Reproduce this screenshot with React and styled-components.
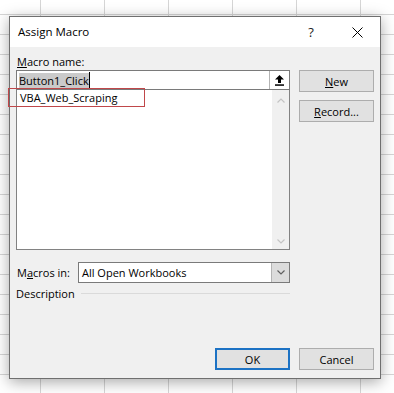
import React from 'react';
import styled, { createGlobalStyle } from 'styled-components';

const Global = createGlobalStyle`
  html, body { margin: 0; padding: 0; }
  body {
    width: 394px;
    height: 393px;
    overflow: hidden;
    font-family: "Open Sans", "Noto Sans", sans-serif;
  }
`;

const Sheet = styled.div`
  box-sizing: border-box;
  width: 394px;
  height: 393px;
  padding: 16px 0 0 9px;
  background-color: #fff;
  background-image:
    linear-gradient(to right, #d6d6d6 1px, transparent 1px),
    linear-gradient(to bottom, #d6d6d6 1px, transparent 1px);
  background-size: 64px 100%, 100% 20px;
  background-position: 40px 0, 0 14px;
`;

const Dialog = styled.div`
  box-sizing: border-box;
  width: 372px;
  height: 363px;
  border: 1px solid #6f6f6f;
  background: #f0f0f0;
  box-shadow: 0 3px 14px rgba(0, 0, 0, 0.35);
  display: flex;
  flex-direction: column;
  font-family: "Open Sans", "Noto Sans", sans-serif;
  font-size: 11px;
  color: #000;
`;

const TitleBar = styled.div`
  height: 30px;
  flex: none;
  background: #fff;
  display: flex;
  align-items: center;
  padding-left: 8px;
`;

const Title = styled.div`
  flex: 1;
  font-size: 11.5px;
  color: #000;
  margin-top: -1px;
`;

const TitleButton = styled.div`
  width: 46px;
  height: 30px;
  display: flex;
  align-items: center;
  justify-content: center;
  font-size: 13px;
  color: #222;
`;

const Body = styled.div`
  flex: 1;
  display: flex;
  flex-direction: column;
  padding: 6px 6px 8px 6px;
`;

const TopSection = styled.div`
  display: flex;
  gap: 9px;
`;

const LeftCol = styled.div`
  width: 274px;
  display: flex;
  flex-direction: column;
`;

const Label = styled.div`
  height: 17px;
  line-height: 17px;
  padding-left: 1px;
  white-space: nowrap;
`;

const Key = styled.span`
  text-decoration: underline;
  text-underline-offset: 1px;
`;

const NameInput = styled.div`
  box-sizing: border-box;
  height: 20px;
  border: 1px solid #7a7a7a;
  background: #fff;
  display: flex;
  align-items: center;
  position: relative;
  z-index: 1;
`;

const Field = styled.div`
  flex: 1;
  display: flex;
  align-items: center;
  padding-left: 2px;
`;

const Selected = styled.span`
  background: #cacaca;
  line-height: 15px;
  height: 15px;
`;

const Caret = styled.span`
  width: 1px;
  height: 16px;
  background: #000;
`;

const CollapseButton = styled.div`
  box-sizing: border-box;
  width: 20px;
  height: 100%;
  border-left: 1px solid #b4b4b4;
  display: flex;
  align-items: center;
  justify-content: center;
`;

const ListBox = styled.div`
  position: relative;
  box-sizing: border-box;
  height: 161px;
  margin-top: -1px;
  border: 1px solid #828282;
  background: #fff;
  display: flex;
`;

const Items = styled.div`
  flex: 1;
`;

const Item = styled.div`
  height: 16px;
  line-height: 16px;
  padding-left: 3px;
`;

const ScrollTrack = styled.div`
  width: 17px;
  background: #f0f0f0;
  display: flex;
  flex-direction: column;
  justify-content: space-between;
  align-items: center;
  padding: 8px 0 5px;
  box-sizing: border-box;
`;

const Annotation = styled.div`
  position: absolute;
  z-index: 2;
  top: -2px;
  left: -9px;
  width: 137px;
  height: 19px;
  box-sizing: border-box;
  border: 1px solid #c0474a;
`;

const ButtonCol = styled.div`
  display: flex;
  flex-direction: column;
  gap: 8px;
  padding-top: 17px;
`;

const Button = styled.div`
  box-sizing: border-box;
  width: 75px;
  height: 22px;
  border: ${p => (p.$default ? '2px solid #1c72c4' : '1px solid #adadad')};
  background: #e1e1e1;
  display: flex;
  align-items: center;
  justify-content: center;
  white-space: nowrap;
`;

const MacrosRow = styled.div`
  margin-top: 12px;
  width: 274px;
  display: flex;
  align-items: center;
  height: 21px;
`;

const RowLabel = styled.div`
  width: 62px;
  padding-left: 1px;
  box-sizing: border-box;
  white-space: nowrap;
`;

const Select = styled.div`
  box-sizing: border-box;
  flex: 1;
  height: 21px;
  border: 1px solid #7a7a7a;
  background: #fff;
  display: flex;
  align-items: center;
`;

const SelectText = styled.div`
  flex: 1;
  padding-left: 3px;
`;

const DropButton = styled.div`
  box-sizing: border-box;
  width: 18px;
  height: 100%;
  background: #dcdcdc;
  border-left: 1px solid #b4b4b4;
  display: flex;
  align-items: center;
  justify-content: center;
`;

const DescriptionRow = styled.div`
  margin-top: 2px;
  width: 274px;
  height: 16px;
  display: flex;
  align-items: center;
  gap: 6px;
`;

const Rule = styled.div`
  flex: 1;
  height: 1px;
  background: #dadada;
`;

const Footer = styled.div`
  margin-top: auto;
  display: flex;
  justify-content: flex-end;
  gap: 9px;
`;

const Chevron = ({ up, color }) => (
  <svg width="8" height="5" viewBox="0 0 8 5">
    <polyline
      points={up ? '0.5,4.5 4,1 7.5,4.5' : '0.5,0.5 4,4 7.5,0.5'}
      fill="none"
      stroke={color}
      strokeWidth="1.2"
    />
  </svg>
);

export default function App() {
  return (
    <>
      <Global />
      <Sheet>
        <Dialog>
          <TitleBar>
            <Title>Assign Macro</Title>
            <TitleButton>?</TitleButton>
            <TitleButton>
              <svg width="11" height="11" viewBox="0 0 11 11">
                <path d="M0.5 0.5 L10.5 10.5 M10.5 0.5 L0.5 10.5" stroke="#000" strokeWidth="1" />
              </svg>
            </TitleButton>
          </TitleBar>
          <Body>
            <TopSection>
              <LeftCol>
                <Label>
                  <Key>M</Key>acro name:
                </Label>
                <NameInput>
                  <Field>
                    <Selected>Button1_Click</Selected>
                    <Caret />
                  </Field>
                  <CollapseButton>
                    <svg width="9" height="11" viewBox="0 0 9 11">
                      <path d="M4.5 0 L9 4.5 L6 4.5 L6 8 L3 8 L3 4.5 L0 4.5 Z" fill="#000" />
                      <rect x="0" y="9.3" width="9" height="1.5" fill="#000" />
                    </svg>
                  </CollapseButton>
                </NameInput>
                <ListBox>
                  <Items>
                    <Item>VBA_Web_Scraping</Item>
                  </Items>
                  <ScrollTrack>
                    <Chevron up color="#c4c4c4" />
                    <Chevron color="#c4c4c4" />
                  </ScrollTrack>
                  <Annotation />
                </ListBox>
              </LeftCol>
              <ButtonCol>
                <Button>
                  <Key>N</Key>ew
                </Button>
                <Button>
                  <Key>R</Key>ecord...
                </Button>
              </ButtonCol>
            </TopSection>
            <MacrosRow>
              <RowLabel>
                M<Key>a</Key>cros in:
              </RowLabel>
              <Select>
                <SelectText>All Open Workbooks</SelectText>
                <DropButton>
                  <Chevron color="#606060" />
                </DropButton>
              </Select>
            </MacrosRow>
            <DescriptionRow>
              <span>Description</span>
              <Rule />
            </DescriptionRow>
            <Footer>
              <Button $default>OK</Button>
              <Button>Cancel</Button>
            </Footer>
          </Body>
        </Dialog>
      </Sheet>
    </>
  );
}
